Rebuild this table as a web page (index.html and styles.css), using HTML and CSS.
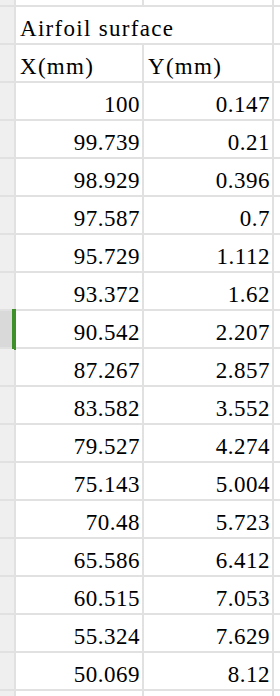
FILE: index.html
```html
<!DOCTYPE html>
<html>
<head>
<meta charset="utf-8">
<link rel="stylesheet" href="styles.css">
</head>
<body>
<div class="sheet">
  <div class="rh"></div><div class="c"></div><div class="c"></div><div class="c"></div>

  <div class="rh"></div><div class="c title span2">Airfoil surface</div><div class="c"></div>
  <div class="rh"></div><div class="c head">X(mm)</div><div class="c head">Y(mm)</div><div class="c"></div>

  <div class="rh"></div><div class="c num">100</div><div class="c num">0.147</div><div class="c"></div>
  <div class="rh"></div><div class="c num">99.739</div><div class="c num">0.21</div><div class="c"></div>
  <div class="rh"></div><div class="c num">98.929</div><div class="c num">0.396</div><div class="c"></div>
  <div class="rh"></div><div class="c num">97.587</div><div class="c num">0.7</div><div class="c"></div>
  <div class="rh"></div><div class="c num">95.729</div><div class="c num">1.112</div><div class="c"></div>
  <div class="rh"></div><div class="c num">93.372</div><div class="c num">1.62</div><div class="c"></div>
  <div class="rh sel"></div><div class="c num">90.542</div><div class="c num">2.207</div><div class="c"></div>
  <div class="rh"></div><div class="c num">87.267</div><div class="c num">2.857</div><div class="c"></div>
  <div class="rh"></div><div class="c num">83.582</div><div class="c num">3.552</div><div class="c"></div>
  <div class="rh"></div><div class="c num">79.527</div><div class="c num">4.274</div><div class="c"></div>
  <div class="rh"></div><div class="c num">75.143</div><div class="c num">5.004</div><div class="c"></div>
  <div class="rh"></div><div class="c num">70.48</div><div class="c num">5.723</div><div class="c"></div>
  <div class="rh"></div><div class="c num">65.586</div><div class="c num">6.412</div><div class="c"></div>
  <div class="rh"></div><div class="c num">60.515</div><div class="c num">7.053</div><div class="c"></div>
  <div class="rh"></div><div class="c num">55.324</div><div class="c num">7.629</div><div class="c"></div>
  <div class="rh"></div><div class="c num">50.069</div><div class="c num">8.12</div><div class="c"></div>

  <div class="rh"></div><div class="c"></div><div class="c"></div><div class="c"></div>
</div>
</body>
</html>
```
FILE: styles.css
```css
html, body {
  margin: 0;
  padding: 0;
  background: #ffffff;
}
.sheet {
  width: 280px;
  height: 696px;
  overflow: hidden;
  display: grid;
  grid-template-columns: 14px 126px 128px 1fr;
  grid-template-rows: 5px repeat(18, 36px) 5px;
  gap: 2px;
  background: #e1e1e1;
  font-family: "Liberation Serif", "DejaVu Serif", serif;
  color: #000;
}
.rh {
  background: #efefef;
  position: relative;
}
.rh.sel {
  background: #d9d9d9;
}
.rh.sel::after {
  content: "";
  position: absolute;
  right: -2px;
  top: -2px;
  bottom: -3px;
  width: 4px;
  background: #3f8f2a;
}
.c {
  background: #ffffff;
  display: flex;
  align-items: flex-end;
  font-family: "Liberation Serif", "DejaVu Serif", serif;
  font-size: 23px;
  line-height: 26px;
  padding-bottom: 1px;
  white-space: nowrap;
  min-width: 0;
  overflow: hidden;
}
.span2 {
  grid-column: span 2;
}
.title, .head {
  padding-left: 4px;
  letter-spacing: 1.3px;
}
.num {
  justify-content: flex-end;
  padding-right: 2px;
  letter-spacing: 0.5px;
}
```
